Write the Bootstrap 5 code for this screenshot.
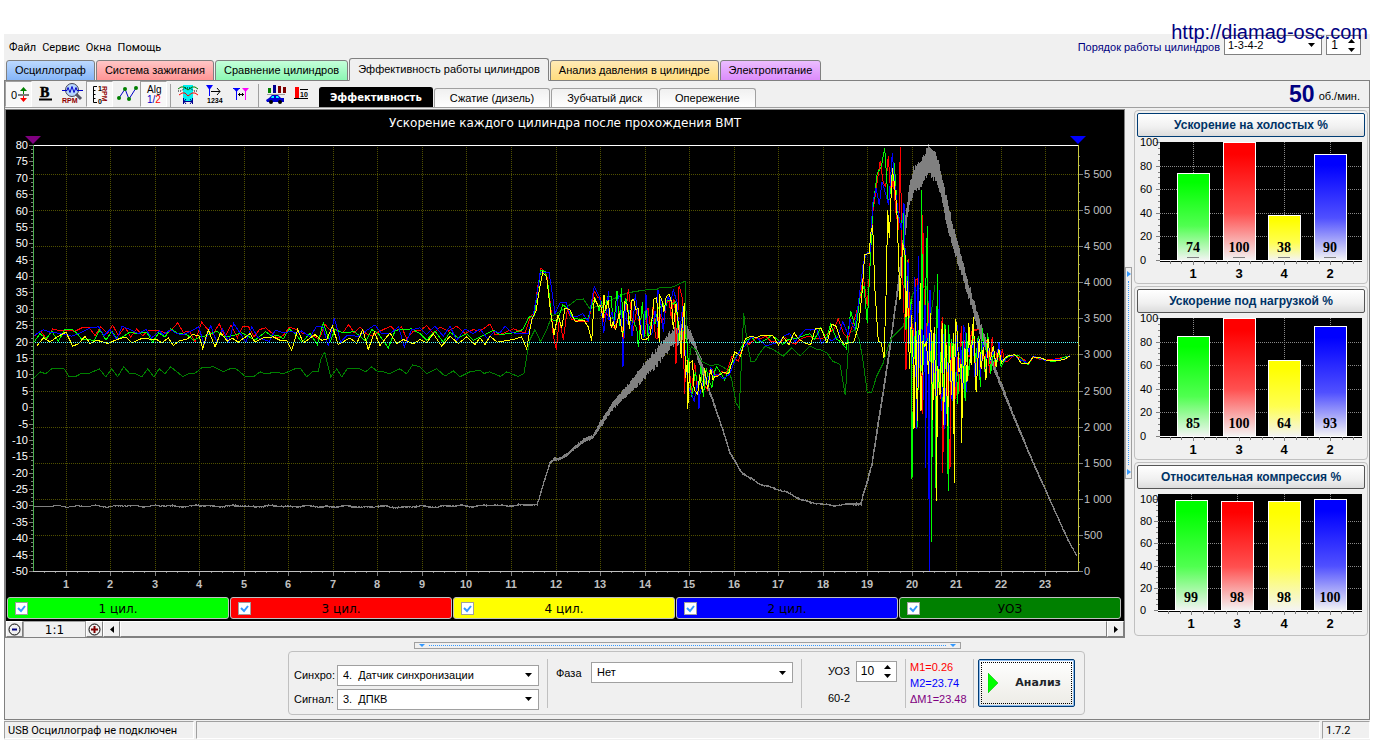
<!DOCTYPE html>
<html lang="ru">
<head>
<meta charset="utf-8">
<meta name="viewport" content="width=device-width, initial-scale=1">
<title>Diamag — Эффективность работы цилиндров</title>
<link href="https://cdn.jsdelivr.net/npm/bootstrap@5.3.0/dist/css/bootstrap.min.css" rel="stylesheet">
<style>
  :root { --face: #f0f0f0; --edge: #808080; --soft: #a0a0a0; }
  body { background: #fff; color: #000; font: 11px/16px "Liberation Sans", Arial, sans-serif; }
  a { color: inherit; text-decoration: none; }
  .site-link { position: absolute; top: 20px; right: 14px; z-index: 5; color: #000080; font-size: 20px; line-height: 24px; }
  .app { height: calc(100vh - 38px); min-height: 640px; margin: 34px 12px 4px 4px; background: var(--face); }
  .menu-row { height: 26px; padding: 1px 9px 0 5px; }
  .menu-row nav { font: 11px/16px Roboto, sans-serif; gap: 6px; }
  .order-label { color: #000080; }
  .form-select, .spin { height: 20px; border: 1px solid var(--edge); border-radius: 0; background-color: #fff; color: #000; font-size: 11px; line-height: 16px; }
  .form-select { padding: 0 20px 1px 5px; background-size: 7px 4px; background-position: right 6px center;
    background-image: url("data:image/svg+xml,%3csvg xmlns='http://www.w3.org/2000/svg' viewBox='0 0 7 4'%3e%3cpath d='M0 0h7L3.500 4z'/%3e%3c/svg%3e"); }
  .order-select { width: 98px; padding-left: 3px; }
  .spin { font-size: 12px; }
  .spin input { width: 100%; min-width: 0; border: 0; padding: 0; background: none; text-align: center; font: inherit; color: #000; }
  .spin button { border: 0; padding: 0; background: none; display: block; line-height: 0; width: 18px; height: 8px; }
  .spin svg { display: block; margin: 0 auto; }

  .main-tabs { height: 21px; border: 0; padding: 0 2px; margin-bottom: -1px; position: relative; z-index: 1; }
  .main-tabs .nav-link { height: 21px; padding: 0 8px; border: 1px solid var(--edge); border-radius: 3px 3px 0 0; margin: 0 1px 0 0; color: #000; line-height: 19px; }
  .main-tabs .nav-link.active { background: var(--face); border-color: var(--edge) var(--edge) var(--face); color: #000; height: 23px; margin-top: -2px; line-height: 20px; }
  .main-tabs .t-blue { background: linear-gradient(#bcd9ff, #85b5f7); }
  .main-tabs .t-red { background: linear-gradient(#ffc6c6, #ff9494); }
  .main-tabs .t-green { background: linear-gradient(#c4ffda, #8cf7b3); }
  .main-tabs .t-amber { background: linear-gradient(#ffeab5, #ffdc7e); }
  .main-tabs .t-violet { background: linear-gradient(#ebbdff, #dc8cfb); }

  .frame { border: 1px solid var(--edge); min-height: 0; }
  .tools { height: 27px; border-bottom: 1px solid var(--soft); padding-right: 9px; }
  .tool { width: 27px; height: 26px; padding: 0; border: 1px solid transparent; border-radius: 0; line-height: 0; flex: none; }
  .tool.pressed { background: #f8f8f8; border-color: var(--soft) #fff #fff var(--soft); }
  .tool-sep { width: 1px; height: 23px; background: var(--soft); margin: 0 3px; }
  .sub-tabs { height: 20px; border: 0; gap: 1px; margin-left: 3px; }
  .sub-tabs .nav-link { height: 19px; margin: 1px 0 0; padding: 0 15px; border: 1px solid var(--soft); border-bottom: 0; border-radius: 3px 3px 0 0; background: linear-gradient(#f0f0f0, #fff); color: #000; line-height: 18px; }
  .sub-tabs .nav-link.active { height: 20px; margin: 0; padding: 0 10px; background: #000; border-color: #000; color: #fff; font: bold 10px/19px "DejaVu Sans", sans-serif; }
  .rpm-value { color: #000080; font-size: 23px; line-height: 24px; }
  .rpm-unit { padding-top: 3px; }

  .scope { border: 1px solid var(--edge); border-width: 1px 1px 0 1px; margin-top: 1px; }
  .scope-black { background: #000; min-height: 0; }
  .plot { display: block; width: 100%; height: 0; min-height: 280px; flex: 1 1 0; }
  .channels { gap: 1px; padding: 0 3px 2px 1px; }
  .channel { flex: 1 1 0; height: 22px; border: 1px solid #c0c0c0; border-radius: 3px; color: #000; font: 12px/22px "DejaVu Sans", sans-serif; cursor: pointer; position: relative; }
  .channel .form-check-input { position: absolute; left: 7px; top: 4px; width: 13px; height: 13px; margin: 0; border: 1px solid var(--soft); border-radius: 0; background-color: #fff; box-shadow: none; }
  .channel .form-check-input:checked { background-size: 11px 11px;
    background-image: url("data:image/svg+xml,%3csvg xmlns='http://www.w3.org/2000/svg' viewBox='0 0 11 11'%3e%3cpath d='M2 5l3 3 4-5' fill='none' stroke='%233399ff' stroke-width='2'/%3e%3c/svg%3e"); }
  .bar-row { height: 17px; border-bottom: 1px solid var(--edge); }
  .bar-row .btn { width: 17px; padding: 0; border: 1px solid; border-color: #fff var(--edge) var(--edge) #fff; border-radius: 0; line-height: 0; background: var(--face); }
  .zoom-value { width: 63px; text-align: center; font: 12px/17px "DejaVu Sans", sans-serif; border: 1px solid var(--soft); border-bottom: 0; }
  .bar-thumb { border: 1px solid; border-color: #fff var(--edge) var(--edge) #fff; }

  .grip-v { width: 7px; height: 212px; border: 1px solid var(--soft); background: var(--face); flex: none; }
  .grip-v i { width: 1px; border-left: 1px dotted #3399ff; }
  .side { width: 237px; flex: none; padding: 2px 1px 0 2px; gap: 2px; }
  .gauge { border: 1px solid #c0c0c0; border-radius: 4px; padding: 2px; }
  .gauge .btn { height: 24px; padding: 0; border: 1px solid #555; border-radius: 2px; background: linear-gradient(#fff, #f0f0f0 60%, #dcdcdc); color: #003366; font-weight: bold; font-size: 12px; line-height: 20px; }
  .gauge .btn.focused { border-color: #003c74; }
  .gauge svg { display: block; width: 100%; height: 144px; }

  .grip-h { width: 547px; height: 7px; border: 1px solid var(--soft); margin: 4px auto 2px 409px; }
  .grip-h i { height: 1px; border-top: 1px dotted #3399ff; }
  .panel-box { width: 797px; height: 64px; border: 1px solid #c0c0c0; border-radius: 4px; margin: 0 0 4px 283px; padding-left: 5px; }
  .panel-box .form-select, .panel-box .spin { border-color: var(--soft); height: 21px; }
  .sync-grid { display: grid; grid-template-columns: 43px 202px; row-gap: 3px; align-items: center; padding-top: 8px; }
  .rule { width: 1px; height: 49px; background: #c0c0c0; }
  .phase-box { padding: 10px 8px 0; }
  .adv-box { padding: 0 8px 0 26px; }
  .marks { line-height: 16px; width: 63px; }
  .go { width: 97px; height: 48px; border: 1px solid #003c74; border-radius: 2px; background: linear-gradient(#fff, #ecebe5); box-shadow: inset 0 0 0 1px #8ebcf0; font: bold 11px/16px "DejaVu Sans", sans-serif; padding: 0 9px; outline: 1px dotted #000; outline-offset: -4px; }
  .status > div { border: 1px solid; border-color: var(--soft) #fff #fff var(--soft); height: 18px; font: 11px/17px Roboto, sans-serif; padding: 0 3px; }
  .status { height: 20px; padding-top: 1px; gap: 2px; }
  svg text { font-family: "Liberation Sans", Arial, sans-serif; }
</style>
</head>
<body>
<a class="site-link" href="http://diamag-osc.com">http://diamag-osc.com</a>

<div class="app d-flex flex-column">
  <header class="menu-row d-flex justify-content-between">
    <nav class="d-flex align-items-center">
      <a href="#">Файл</a><a href="#">Сервис</a><a href="#">Окна</a><a href="#">Помощь</a>
    </nav>
    <div class="d-flex align-items-start">
      <label class="order-label pt-1 me-1" for="order">Порядок работы цилиндров</label>
      <select id="order" class="form-select order-select"><option>1-3-4-2</option></select>
      <div class="spin d-flex align-items-center ms-1" style="width:35px">
        <input type="text" value="1" aria-label="Номер цилиндра">
        <div><button type="button" aria-label="Больше"><svg width="7" height="4"><path d="M0 4h7L3.500 0z"/></svg></button><button type="button" aria-label="Меньше"><svg width="7" height="8"><path d="M0 3h7L3.500 7z"/></svg></button></div>
      </div>
    </div>
  </header>

  <ul class="nav nav-tabs main-tabs flex-nowrap">
    <li><a class="nav-link t-blue" href="#">Осциллограф</a></li>
    <li><a class="nav-link t-red" href="#">Система зажигания</a></li>
    <li><a class="nav-link t-green" href="#">Сравнение цилиндров</a></li>
    <li><a class="nav-link active" href="#">Эффективность работы цилиндров</a></li>
    <li><a class="nav-link t-amber" href="#">Анализ давления в цилиндре</a></li>
    <li><a class="nav-link t-violet" href="#">Электропитание</a></li>
  </ul>

  <div class="frame d-flex flex-column flex-grow-1">
    <div class="tools d-flex align-items-end">
      <button class="btn tool pressed" type="button" aria-label="Ноль"><svg width="24" height="24"><text x="4" y="17" font-size="11">0</text><path d="M11 13h11" stroke="#000"/><path d="M16.500 6v6" stroke="green"/><path d="M13 9l3.500-4L20 9z" fill="green"/><path d="M16.500 14v5" stroke="red"/><path d="M13 16l3.500 4 3.500-4z" fill="red"/></svg></button>
      <button class="btn tool" type="button" aria-label="Жирный"><svg width="24" height="24"><text x="6" y="15" font-size="14" font-weight="bold" style="font-family:'Liberation Serif',serif" stroke="#000" stroke-width=".6">B</text><path d="M5 17.500h13" stroke="#000" stroke-width="2"/></svg></button>
      <button class="btn tool" type="button" aria-label="Обороты"><svg width="24" height="24"><circle cx="11" cy="8" r="6.500" fill="#b5d5ff" stroke="#445"/><path d="M1 8.500h5l1-3 2 5 2-6 2 6 2-5 1 3h6" fill="none" stroke="#0000c8"/><path d="M15 12l5 5" stroke="#556" stroke-width="3"/><text x="1" y="21" font-size="7" font-weight="bold" fill="#900000">RPM</text></svg></button>
      <button class="btn tool pressed" type="button" aria-label="Шкала"><svg width="24" height="24"><path d="M9 4.500H5.500v16H9M5.500 8.500h2M5.500 12.500h2M5.500 16.500h2" fill="none" stroke="#000"/><text x="10" y="9" font-size="7" font-weight="bold">1</text><text x="10" y="22" font-size="7" font-weight="bold">0</text><text transform="translate(14 4) rotate(90)" font-size="7" font-weight="bold" fill="#900000">RPM</text></svg></button>
      <button class="btn tool" type="button" aria-label="Точки"><svg width="24" height="24"><path d="M4 16l6-9 4 10 7-11" fill="none" stroke="#0000c8"/><g fill="green"><circle cx="4" cy="16" r="2"/><circle cx="10" cy="7" r="2"/><circle cx="14" cy="17" r="2"/><circle cx="21" cy="6" r="2"/></g></svg></button>
      <button class="btn tool pressed" type="button" aria-label="Алгоритм"><svg width="24" height="24"><text x="5" y="11" font-size="10">Alg</text><text x="5" y="21" font-size="10" fill="#0000c8">1/<tspan fill="red">2</tspan></text></svg></button>
      <span class="tool-sep"></span>
      <button class="btn tool" type="button" aria-label="Диапазон"><svg width="24" height="24"><path d="M7 3h10v16H7z" fill="#00f0f0"/><path d="M2 7l3-2h3l4 3 4-3h3l3 2" fill="none" stroke="green"/><path d="M2 9h3l4-3h5l4 3h4" fill="none" stroke="#000" stroke-dasharray="1 1"/><path d="M3 13l3-2h3l3 3 4-3h3l3 2" fill="none" stroke="red"/><path d="M7.500 16v6M16.500 16v6M8 19.500h9M10 17l-2 2.500 2 2.500M14 17l2 2.500-2 2.500" fill="none" stroke="#000090"/></svg></button>
      <button class="btn tool" type="button" aria-label="Порядок"><svg width="24" height="24"><path d="M3 3h7L6.500 8z" fill="#00f"/><path d="M6.500 6v8" stroke="#00f"/><path d="M8 9.500h9M14 6l3 3.500-3 3.500" fill="none" stroke="#000"/><text x="4" y="21" font-size="7" font-weight="bold">1234</text></svg></button>
      <button class="btn tool" type="button" aria-label="Маркеры"><svg width="24" height="24"><path d="M3 6h7l-3.500 4z" fill="#00f"/><path d="M6.500 8v10M3 6.500h7" stroke="#00f"/><path d="M12 6h7l-3.500 4z" fill="#f0f"/><path d="M15.500 8v10" stroke="#f0f"/><path d="M8 12.500h6M10 11l-1.500 1.500L10 14M12 11l1.500 1.500L12 14" fill="none" stroke="#000"/></svg></button>
      <span class="tool-sep"></span>
      <button class="btn tool" type="button" aria-label="Баланс"><svg width="24" height="24"><path d="M4 6h3v5H4z" fill="green"/><path d="M9 3h3v8H9z" fill="#000090"/><path d="M14 4h3v7h-3zM19 5h3v6h-3z" fill="#800000"/><path d="M3 12.500h18" stroke="#a0a0a0"/><path d="M2 18l3-2 3-3h6l3 3h3v4H3z" fill="#0000d0"/><path d="M8 14h2v2H7zM12 14h2l1 2h-3z" fill="#0ff"/><circle cx="7" cy="20" r="2"/><circle cx="16" cy="20" r="2"/></svg></button>
      <button class="btn tool" type="button" aria-label="Десять"><svg width="24" height="24"><path d="M4 5h4v11H4z" fill="red"/><path d="M3 16.500h14M9 7.500h8" stroke="#000"/><text x="9" y="15" font-size="7" font-weight="bold">10</text></svg></button>
      <ul class="nav nav-tabs sub-tabs flex-nowrap">
        <li><a class="nav-link active" href="#">Эффективность</a></li>
        <li><a class="nav-link" href="#">Сжатие (дизель)</a></li>
        <li><a class="nav-link" href="#">Зубчатый диск</a></li>
        <li><a class="nav-link" href="#">Опережение</a></li>
      </ul>
      <div class="ms-auto align-self-center d-flex align-items-center gap-1"><strong class="rpm-value">50</strong><span class="rpm-unit">об./мин.</span></div>
    </div>

    <main class="d-flex flex-grow-1">
      <section class="scope d-flex flex-column flex-grow-1">
        <div class="scope-black d-flex flex-column flex-grow-1">
          <svg class="plot" id="plot" role="img" aria-label="Ускорение каждого цилиндра после прохождения ВМТ"></svg>
          <div class="channels d-flex">
            <label class="channel text-center" style="background:#00ff00"><input class="form-check-input" type="checkbox" checked>1 цил.</label>
            <label class="channel text-center" style="background:#ff0000"><input class="form-check-input" type="checkbox" checked>3 цил.</label>
            <label class="channel text-center" style="background:#ffff00"><input class="form-check-input" type="checkbox" checked>4 цил.</label>
            <label class="channel text-center" style="background:#0000ff"><input class="form-check-input" type="checkbox" checked>2 цил.</label>
            <label class="channel text-center" style="background:#008000"><input class="form-check-input" type="checkbox" checked>УОЗ</label>
          </div>
        </div>
        <div class="bar-row d-flex">
          <button class="btn" type="button" aria-label="Уменьшить"><svg width="13" height="13"><circle cx="6.500" cy="6.500" r="5.500" fill="none" stroke="#000"/><path d="M4 6.500h5" stroke="#000080" stroke-width="2"/></svg></button>
          <div class="zoom-value">1:1</div>
          <button class="btn" type="button" aria-label="Увеличить"><svg width="13" height="13"><circle cx="6.500" cy="6.500" r="5.500" fill="none" stroke="#000"/><path d="M3 6.500h7M6.500 3v7" stroke="#800000" stroke-width="2"/></svg></button>
          <button class="btn" type="button" aria-label="Влево"><svg width="4" height="7"><path d="M4 0v7L0 3.500z"/></svg></button>
          <div class="bar-thumb flex-grow-1"></div>
          <button class="btn" type="button" aria-label="Вправо"><svg width="4" height="7"><path d="M0 0v7l4-3.500z"/></svg></button>
        </div>
      </section>
      <div class="grip-v d-flex flex-column align-items-center justify-content-between align-self-center">
        <svg width="4" height="9"><path d="M0 3v6l4-3z" fill="#39f"/></svg><i class="flex-grow-1 my-1"></i><svg width="4" height="9"><path d="M0 0v6l4-3z" fill="#39f"/></svg>
      </div>
      <aside class="side d-flex flex-column">
        <div class="gauge"><button class="btn w-100 focused" type="button">Ускорение на холостых %</button><svg data-values="74,100,38,90" data-left="23" data-top="5" data-full="5" data-base="123" data-marks="1"></svg></div>
        <div class="gauge"><button class="btn w-100" type="button">Ускорение под нагрузкой %</button><svg data-values="85,100,64,93" data-left="23" data-top="5" data-full="5" data-base="123"></svg></div>
        <div class="gauge"><button class="btn w-100" type="button">Относительная компрессия %</button><svg data-values="99,98,98,100" data-left="21" data-top="5" data-full="10" data-base="121"></svg></div>
      </aside>
    </main>

    <div class="grip-h d-flex align-items-center px-1"><svg width="6" height="3"><path d="M0 0h6L3 3z" fill="#39f"/></svg><i class="flex-grow-1 mx-1"></i><svg width="6" height="3"><path d="M0 0h6L3 3z" fill="#39f"/></svg></div>
    <form class="panel-box d-flex align-items-center">
      <div class="sync-grid">
        <label for="sync">Синхро:</label><select id="sync" class="form-select"><option>4.&nbsp; Датчик синхронизации</option></select>
        <label for="signal">Сигнал:</label><select id="signal" class="form-select"><option>3.&nbsp; ДПКВ</option></select>
      </div>
      <span class="rule ms-2"></span>
      <div class="phase-box d-flex align-self-start align-items-center">
        <label for="phase" style="width:35px">Фаза</label>
        <select id="phase" class="form-select" style="width:202px"><option>Нет</option></select>
      </div>
      <span class="rule"></span>
      <div class="adv-box">
        <div class="d-flex align-items-center mb-1"><label for="adv" style="width:28px">УОЗ</label>
          <div class="spin d-flex align-items-center" style="width:41px">
            <input id="adv" type="text" value="10">
            <div><button type="button" aria-label="Больше"><svg width="7" height="4"><path d="M0 4h7L3.500 0z"/></svg></button><button type="button" aria-label="Меньше"><svg width="7" height="8"><path d="M0 3h7L3.500 7z"/></svg></button></div>
          </div>
        </div>
        <div class="pt-1">60-2</div>
      </div>
      <span class="rule me-1"></span>
      <div class="marks"><div style="color:#f00">M1=0.26</div><div style="color:#00f">M2=23.74</div><div style="color:#800080">ΔM1=23.48</div></div>
      <span class="rule me-1"></span>
      <button class="go btn d-flex align-items-center justify-content-between" type="button"><svg width="11" height="20"><path d="M0 0v20L10 10z" fill="#0f0" stroke="#0a0" stroke-width=".5"/></svg><span class="pe-1">Анализ</span></button>
    </form>
  </div>

  <footer class="status d-flex">
    <div style="width:190px">USB Осциллограф не подключен</div>
    <div class="flex-grow-1"></div>
    <div style="width:48px">1.7.2</div>
  </footer>
</div>

<script src="https://cdn.jsdelivr.net/npm/bootstrap@5.3.0/dist/js/bootstrap.bundle.min.js"></script>
<script>
// Recorded traces. Each is a list of blocks [originX, originY, "x,y x,y ..."] in thirds of a recorder dot.
const REC = { x: 99, y: 435, w: 3135, h: 1281 };
const TRACES = {
  uoz: { color: '#008000', blocks: [
    [0, 390, "102,745 120,727 137,733 155,718 192,718 208,742 225,742 242,733 265,733 298,718 317,742 335,718 353,742 371,712 390,733 408,733 425,742 443,718 461,742 478,718 495,733 512,712 548,741 565,733 583,733 605,715 640,712 670,727 690,718 708,718 735,740 760,742 780,727 795,733 830,728 850,733 885,718 902,718 920,742 937,727 955,727 962,690 974,668 992,742 1010,718 1025,742 1042,718 1080,718 1097,727 1115,712 1133,727 1150,727 1167,733 1200,718 1220,733 1238,706 1260,712 1280,733 1310,718 1335,740 1360,724 1380,742 1410,727"],
    [1440, 720, "0,392 12,402 28,397 62,411 80,397 115,411 132,402 140,350 150,300 165,270 182,307 200,270 215,230 250,210 290,180 310,178 330,208 350,200 400,178 440,160 470,155 500,150 530,150 540,142 570,145 600,132 615,124 619,240 624,390 634,320 650,335 665,365 690,378 715,375 745,392 755,420 768,490 778,507 791,220 800,300 812,365 825,365 840,340 855,320 880,330 910,350 935,325 960,350 990,320 1010,330"],
    [2460, 390, "0,660 20,670 38,695 60,705 76,798 88,610 105,602 118,630 130,700 142,790 155,788 170,740 190,700 205,650 215,625 240,600 250,590 262,540 280,490 300,475 320,470 330,580 345,465"]] },
  c3: { color: '#ff0000', blocks: [
    [0, 390, "102,620 122,605 140,628 158,598 180,603 200,602 225,605 245,595 268,595 285,618 302,592 322,612 338,587 355,618 375,592 392,622 410,598 428,618 446,603 480,604 500,612 515,600 533,580 550,608 570,606 585,638 605,578 622,598 638,615 658,583 675,622 693,587 712,625 728,590 745,590 762,622 778,600 797,595 815,610 832,625 850,618 868,593 890,600 910,612 930,615 958,628 975,585 992,603 1010,600 1028,610 1046,585 1063,610 1080,592 1098,612 1115,618 1130,610 1150,600 1172,590 1188,605 1205,592 1220,628 1240,605 1260,603 1280,588 1300,612 1320,592 1345,605 1370,590 1395,612 1420,600"],
    [1440, 720, "0,275 30,253 45,285 60,285 100,268 135,280 150,235 165,215 172,150 183,85 200,105 212,200 220,290 229,330 238,240 250,300 262,210 275,240 300,245 325,245 335,200 343,155 355,175"]] },
  c1: { color: '#00ff00', blocks: [
    [0, 390, "102,638 120,612 138,628 156,606 175,635 195,600 218,600 232,612 245,630 283,632 300,600 318,632 335,605 353,630 371,620 390,607 410,612 440,608 458,638 476,610 495,622 512,598 530,610 560,615 580,632 600,622 620,618 650,605 672,622 700,618 725,610 745,620 765,632 797,606 815,620 835,618 850,628 868,598 890,618 905,638 930,612 952,645 970,580 990,638 1005,600 1030,610 1063,606 1098,635 1115,600 1135,612 1165,655 1186,602 1235,598 1260,612 1280,632 1305,605 1330,638 1350,608 1375,625 1400,612 1420,632"],
    [1440, 720, "0,292 40,272 60,285 100,280 128,270 148,232 163,228 172,160 182,92 196,95 205,140 215,240 232,245 248,195 262,205 280,235 300,240 325,235 338,190 345,175 358,215"]] },
  c2: { color: '#0000ff', blocks: [
    [0, 390, "102,618 130,600 150,608 185,612 215,620 245,608 272,594 296,592 312,618 330,600 350,630 366,590 390,600 415,612 438,600 455,625 478,604 490,615 512,600 530,612 550,615 575,603 596,592 612,645 632,588 650,638 668,598 686,638 701,582 720,610 737,638 755,592 775,625 808,636 826,602 850,610 875,605 890,612 905,604 930,622 950,590 968,590 985,650 1003,565 1022,638 1040,618 1075,620 1098,604 1125,586 1145,612 1170,612 1196,592 1213,652 1235,600 1260,595 1280,615 1305,590 1330,620 1350,590 1370,632 1395,598 1420,612"],
    [1440, 720, "0,268 22,297 45,275 60,280 75,260 95,280 145,283 160,225 170,170 180,100 195,97 207,97 215,150 225,222 240,190 258,187 272,230 290,232 308,222 325,245 332,200 343,140 358,170"]] },
  c4: { color: '#ffff00', blocks: [
    [0, 390, "110,650 130,625 150,637 175,620 198,608 218,650 235,643 255,620 270,642 290,632 325,642 350,630 378,622 395,640 425,627 470,630 485,640 505,625 520,648 540,633 560,630 578,615 597,618 608,657 625,600 645,652 662,610 682,635 697,626 715,638 750,612 765,638 790,625 820,622 840,632 860,632 875,663 893,600 910,640 945,615 965,632 980,630 997,590 1015,645 1050,625 1070,642 1088,600 1105,660 1123,608 1140,648 1170,610 1190,642 1210,630 1240,643 1260,630 1280,640 1300,612 1325,650 1350,620 1375,642 1400,622 1425,645"],
    [1440, 720, "0,295 15,315 30,290 52,308 100,300 125,292 140,328 155,240 168,215 178,150 188,98 200,112 212,220 222,285 234,225 245,265 255,205 270,210 285,245 312,242 325,262 335,305 343,175 355,200"]] }
};
// Second run-up, up to the rev limiter.
const RISE = {
  c3: "118,520 130,440 142,530 150,400 158,250 168,180 181,92 190,160 197,170 205,78 212,190 220,150 228,250 236,300 241,52 246,380",
  c1: "92,545 108,600 120,500 132,470 142,580 150,410 158,240 172,130 184,110 194,55 205,220 214,170 223,98 232,240 242,290 250,250",
  c2: "90,570 104,600 118,500 130,400 140,370 150,368 158,220 168,175 178,225 186,155 195,185 206,225 217,70 226,180 235,250 244,300 252,220",
  c4: "84,640 100,640 116,590 126,490 134,375 148,370 152,310 158,285 164,470 175,635 184,640 192,685 198,500 203,240 208,325 217,115 224,170 230,230 240,510 248,340 256,380"
};
// Unstable section, same dots: x, top, bottom
const STORM = [[2700,560,960],[2720,580,1150],[2737,760,1330],[2765,860,1250],[2785,860,1180],[2800,880,1300],[2835,940,1330],[2862,970,1230],[2885,980,1230],[2915,960,1160]];
const SPIKES = {
  c3: [[1869,1020],[1885,868],[2020,900],[2028,1093],[2038,858],[2054,1185],[2752,838],[2768,645],[2828,1420],[2850,1410],[2937,990]],
  c1: [[1864,865],[1872,1000],[1915,1043],[1945,1025],[2736,1440],[2765,570],[2794,1630],[2806,1465],[2812,822],[2845,1475],[2782,680]],
  c2: [[1826,875],[1869,1103],[1874,960],[1974,870],[2097,1228],[2755,768],[2777,1405],[2788,1716],[2790,870],[2818,870],[2890,975]],
  c4: [[1812,885],[1848,985],[1978,1030],[2044,1075],[2053,910],[2063,1230],[2762,850],[2742,1290],[2809,1505],[2863,1450],[2866,958],[2884,1330]]
};
// Loaded section: x, centre, half swing
const ENV = [[1800,940,60],[1840,945,70],[1900,945,75],[1960,950,78],[2010,950,75],[2042,950,95],[2054,1080,130],[2066,1145,75],[2090,1155,60],[2120,1145,50],[2150,1125,30],[2185,1128,10],[2196,1080,25],[2215,1070,25],[2228,1030,15],[2260,1022,18],[2350,1020,18],[2440,1010,26],[2520,995,45],[2545,1020,30]];
const GREY = [[33,507,507],[200,506,507],[400,507,508],[537,505,506],[544,481,483],[550,462,464],[554,458,461],[558,459,461],[566,454,457],[575,446,449],[585,438,442],[592,436,439],[600,422,428],[612,403,410],[620,394,402],[640,370,383],[655,351,367],[670,332,348],[680,324,342],[687,325,340],[693,338,346],[702,363,376],[708,386,391],[722,427,430],[730,453,455],[742,473,475],[760,484,485],[790,494,495],[810,503,504],[825,505,506],[845,505,506],[861,503,506],[863,493,497],[867,480,484],[872,461,466],[878,418,427],[883,388,396],[889,347,357],[892,326,334],[896,294,305],[901,250,266],[905,215,235],[909,187,204],[913,168,193],[920,162,186],[928,146,173],[935,153,180],[940,169,194],[945,193,218],[953,228,250],[960,252,270],[968,283,297],[980,324,338],[987,343,353],[995,368,375],[1003,388,394],[1017,424,428],[1033,462,465],[1050,500,502],[1067,538,540],[1076,555,556]];

function rng(seed) { return () => (seed = (seed * 16807) % 2147483647) / 2147483647; }
function lerp(table, x, k) {
  for (let i = 1; i < table.length; i++) if (x <= table[i][0]) {
    const a = table[i - 1], b = table[i], t = (x - a[0]) / (b[0] - a[0]);
    return a[k] + (b[k] - a[k]) * t;
  }
  return table[table.length - 1][k];
}
function points(key, n) {
  const r = rng(7919 * n + 31), out = [];
  const read = (ox, oy, s) => s.split(' ').forEach(p => { const [x, y] = p.split(',').map(Number); out.push([ox + x, oy + y]); });
  TRACES[key].blocks.forEach(b => read(...b));
  if (key === 'uoz') return out;
  const byX = (a, b) => a[0] - b[0], load = SPIKES[key].filter(s => s[0] < 2600);
  for (let x = 1802; x < 2545;) {
    load.push([x, lerp(ENV, x, 1) + (r() * 2 - 1) * lerp(ENV, x, 2)]);
    x += x < 2150 ? 5 + r() * 6 : 12 + r() * 7;
  }
  out.push(...load.sort(byX));
  read(2460, 390, RISE[key]);
  const storm = SPIKES[key].filter(s => s[0] > 2600);
  for (let x = 2718, i = 0; x < 2915; x += 4 + r() * 3, i++) {
    const t = lerp(STORM, x, 1), b = lerp(STORM, x, 2);
    storm.push([x, i % 2 ? t + (b - t) * r() * .5 : b - (b - t) * r() * .5]);
  }
  out.push(...storm.sort(byX));
  for (let x = 2920, i = 0; x < 3010; x += 6 + r() * 3, i++) out.push([x, 1070 + (i % 2 ? 1 : -1) * (.1 + r() * .9) * (120 - (x - 2920))]);
  for (let x = 3014; x < 3090; x += 10) out.push([x, 1080 + Math.sin(x / 14 + n / 3) * 14 + (r() - .5) * 12]);
  [[3100, 1073], [3120, 1076], [3140, 1080], [3165, 1082], [3190, 1077], [3209, 1068]].forEach(([x, y]) => out.push([x, y + (r() - .5) * 8]));
  return out;
}

function drawPlot() {
  const svg = document.getElementById('plot'), W = svg.clientWidth, H = svg.clientHeight;
  const L = 27, T = 35, R = W - 46, B = H - 26, px = v => Math.round(v) + .5;
  const X = x => L + (x - REC.x) / REC.w * (R - L), Y = y => T + (y - REC.y) / REC.h * (B - T);
  const xt = t => L + (t - .26) / 23.48 * (R - L), yv = v => T + (80 - v) / 130 * (B - T), yr = v => B - v / 5903 * (B - T);
  let s = `<text x="${W / 2}" y="17" text-anchor="middle" fill="#fff" font-size="12" style="font-family:'DejaVu Sans',sans-serif">Ускорение каждого цилиндра после прохождения ВМТ</text><g shape-rendering="crispEdges" fill="none">`;
  let grid = '', ticks = '', text = '';
  for (let i = 1; i <= 23; i++) {
    grid += `M${px(xt(i))} ${T}V${B}`; ticks += `M${px(xt(i))} ${B}v5`;
    text += `<text x="${Math.round(xt(i))}" y="${B + 17}" text-anchor="middle" font-weight="bold" fill="#c0c0c0">${i}</text>`;
  }
  for (let t = .5; t < 23.7; t += .25) ticks += `M${px(xt(t))} ${B}v2`;
  for (let v = 500; v <= 5500; v += 500) grid += `M${L} ${px(yr(v))}H${R}`;
  for (let v = 0; v <= 5800; v += 125) ticks += `M${R} ${px(yr(v))}h${v % 500 ? 2 : 5}`;
  for (let v = 0; v <= 5500; v += 500) text += `<text x="${R + 6}" y="${Math.round(yr(v)) + 4}" fill="#c0c0c0">${String(v).replace(/(\d)(\d{3})$/, '$1 $2')}</text>`;
  for (let v = -50; v <= 80; v += 1.25) ticks += `M${L} ${px(yv(v))}h${v % 5 ? -2 : -4}`;
  for (let v = -50; v <= 80; v += 5) text += `<text x="${L - 5}" y="${Math.round(yv(v)) + 4}" text-anchor="end" fill="#fff">${v}</text>`;
  s += `<path d="${grid}" stroke="#505000" stroke-dasharray="1 1"/><path d="${ticks}" stroke="#808080"/>`;
  const r = rng(4242), g = [];
  for (let x = 33; x <= 1076; x++) {
    const w = lerp(GREY, x, 2) - lerp(GREY, x, 1), j = w > 12 ? 5 : w > 4 ? 2 : 1;
    const drift = x < 537 || (x > 750 && x < 860) ? Math.sin(x / 4) * Math.sin(x / 13) : 0;
    g.push([x * 3, (lerp(GREY, x, 1) + drift + (r() - .5) * j) * 3, (lerp(GREY, x, 2) + drift + .5 + (r() - .5) * j) * 3]);
  }
  s += `<path d="${g.map(p => `M${px(X(p[0]))} ${Y(p[1])}V${Y(p[2])}`).join('')}" stroke="#808080"/>`;
  s += `<polyline points="${g.map(p => X(p[0]).toFixed(1) + ',' + Y((p[1] + p[2]) / 2).toFixed(1)).join(' ')}" stroke="#808080"/>`;
  Object.keys(TRACES).forEach((k, n) => {
    s += `<polyline points="${points(k, n + 1).map(p => X(p[0]).toFixed(1) + ',' + Y(p[1]).toFixed(1)).join(' ')}" stroke="${TRACES[k].color}"/>`;
  });
  s += `<path d="M${L} ${px(yv(20))}H${R}" stroke="#5ff" stroke-dasharray="1 1"/>`;
  s += `<path d="M${L} ${T + .5}H${R}" stroke="#fff"/><path d="M${L} ${B + .5}H${R}" stroke="#c0c0c0"/><path d="M${L + .5} ${T}V${B}" stroke="#4caf50"/><path d="M${R + .5} ${T}V${B}" stroke="#c8c83c"/></g>`;
  s += `<g font-size="11">${text}</g><path d="M${L - 8} ${T - 9}h16l-8 8z" fill="#800080"/><path d="M${R - 8} ${T - 9}h16l-8 8z" fill="#00f"/>`;
  svg.innerHTML = s;
}

const BAR = [['#00ff00', '#50ff50'], ['#ff0000', '#ff5050'], ['#ffff00', '#ffff50'], ['#0000ff', '#5050ff']], NAMES = [1, 3, 4, 2];
function drawGauge(svg, id) {
  const d = svg.dataset, W = svg.clientWidth, L = +d.left, T = +d.top, F = +d.full, B = +d.base, R = W - 3;
  const y = v => Math.round(B - v / 100 * (B - F));
  let s = '<defs>' + BAR.map(([c, m], i) => `<linearGradient id="g${id}${i}" x2="0" y2="1"><stop offset=".1" stop-color="${c}"/><stop offset=".6" stop-color="${m}"/><stop offset="1" stop-color="#f4f4f4"/></linearGradient>`).join('') + '</defs>';
  s += `<g shape-rendering="crispEdges"><rect x="${L}" y="${T}" width="${R - L}" height="${B - T + 2}"/>`;
  let grid = '', ticks = '', text = '', bars = '';
  for (let v = 0; v <= 100; v += 20) {
    if (v && v < 100) grid += `M${L} ${y(v) + .5}H${R}`;
    ticks += `M${L} ${y(v) + .5}h-4`;
    text += `<text x="3" y="${y(v) + 4}" font-size="11">${v}</text>`;
  }
  for (let v = 5; v < 100; v += 5) ticks += `M${L} ${y(v) + .5}h-2`;
  const step = (R - L) * .2265;
  for (let i = 0; i < 17; i++) ticks += `M${Math.round(L + 10 + i * step / 4) + .5} ${B + 1}v3`;
  d.values.split(',').forEach((v, i) => {
    const c = Math.round(L + (R - L) * .163 + i * step);
    grid += `M${c + .5} ${T}V${B}`; ticks += `M${c + .5} ${B}v5`;
    bars += `<rect x="${c - 15.500}" y="${y(v) + .5}" width="32" height="${B - y(v)}" fill="url(#g${id}${i})" stroke="#fff"/>`;
    if (d.marks) bars += `<path d="M${c - 6} ${B - 2.5}h12" stroke="#808080"/>`;
    text += `<text x="${c}" y="${B - 8}" text-anchor="middle" font-size="14" font-weight="bold" style="font-family:'Liberation Serif',serif">${v}</text>`;
    text += `<text x="${c}" y="${B + 18}" text-anchor="middle" font-size="13" font-weight="bold">${NAMES[i]}</text>`;
  });
  s += `<path d="${grid}" stroke="#888" stroke-dasharray="1 1"/><path d="${ticks}" stroke="#808080"/>${bars}<path d="M${L} ${B + .5}H${R}" stroke="#fff"/></g>${text}`;
  svg.innerHTML = s;
}
function drawAll() { drawPlot(); document.querySelectorAll('.gauge svg').forEach(drawGauge); }
addEventListener('resize', drawAll);
drawAll();
</script>
</body>
</html>
